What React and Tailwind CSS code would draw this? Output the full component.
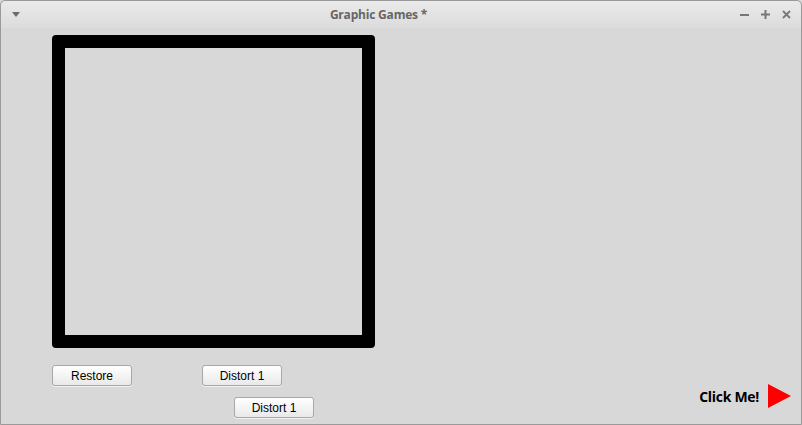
export default function App() {
  const btn =
    'h-[21px] w-[80px] rounded-[3px] border border-[#a8a8a8] bg-gradient-to-b from-[#ffffff] to-[#e9e9e9] text-[12px] text-black font-["Liberation_Sans",sans-serif] flex items-center justify-center shadow-[0_1px_0_#f0f0f0]';

  return (
    <div className="w-[802px] h-[425px] overflow-hidden bg-[#d8d8d8]">
      <div className="w-full h-full flex flex-col rounded-t-[5px] border border-[#9a9a9a] bg-[#d8d8d8]">
        {/* Title bar */}
        <div className="h-[27px] flex items-center px-[10px] bg-gradient-to-b from-[#eaeaea] to-[#dcdcdc] rounded-t-[5px]">
          <div className="w-[10px] flex justify-center">
            <div className="w-0 h-0 border-l-[4px] border-r-[4px] border-t-[5px] border-l-transparent border-r-transparent border-t-[#6a6a6a]" />
          </div>
          <div className="flex-1 text-center text-[12px] font-bold text-[#666666] font-['Open_Sans',sans-serif] tracking-[-0.2px] pr-[4px]">
            Graphic Games *
          </div>
          <div className="flex items-center gap-[12px] text-[#777777]">
            <svg width="9" height="9" viewBox="0 0 9 9">
              <rect x="0" y="4" width="9" height="2" fill="currentColor" />
            </svg>
            <svg width="9" height="9" viewBox="0 0 9 9">
              <rect x="0" y="3.5" width="9" height="2" fill="currentColor" />
              <rect x="3.5" y="0" width="2" height="9" fill="currentColor" />
            </svg>
            <svg width="9" height="9" viewBox="0 0 9 9">
              <path d="M1 1 L8 8 M8 1 L1 8" stroke="currentColor" strokeWidth="1.8" />
            </svg>
          </div>
        </div>

        {/* Body */}
        <div className="flex-1 flex flex-col pl-[51px] pt-[7px]">
          <div className="w-[323px] h-[313px] border-[13px] border-black rounded-[4px]" />

          <div className="flex mt-[17px]">
            <div className={btn}>Restore</div>
            <div className={`${btn} ml-[70px]`}>Distort 1</div>
          </div>

          <div className="flex items-start mt-[11px]">
            <div className={`${btn} ml-[182px]`}>Distort 1</div>
            <div className="flex-1 flex justify-end items-center pr-[10px] -mt-[13px]">
              <span className="text-[14px] font-bold text-black font-['Open_Sans',sans-serif] tracking-[-0.3px] mr-[9px]">
                Click Me!
              </span>
              <svg width="23" height="24" viewBox="0 0 23 24">
                <polygon points="0,0 23,12 0,24" fill="#ff0000" />
              </svg>
            </div>
          </div>
        </div>
      </div>
    </div>
  );
}
